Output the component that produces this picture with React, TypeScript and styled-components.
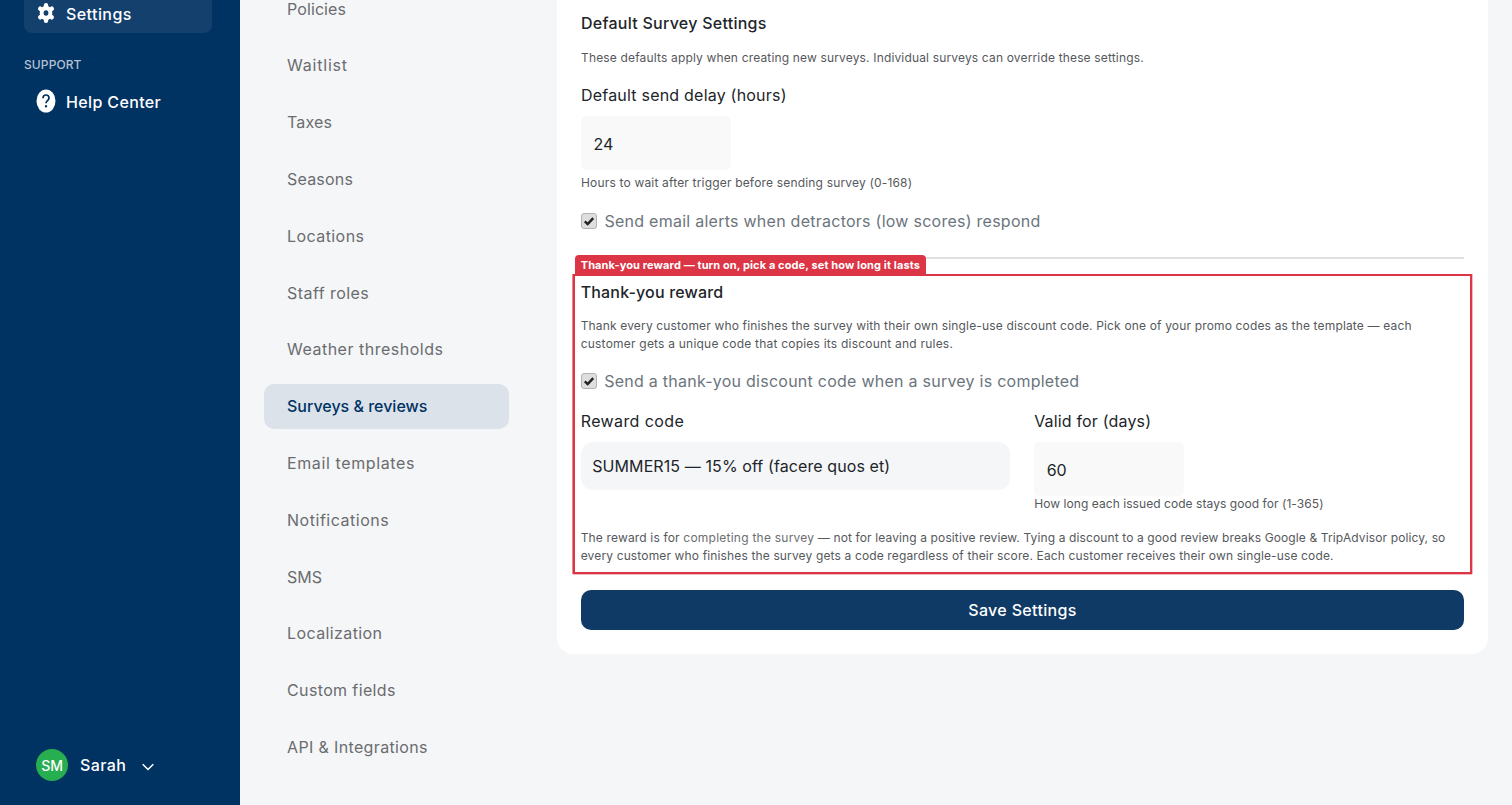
import React from 'react';
import styled, { createGlobalStyle } from 'styled-components';

const GlobalStyle = createGlobalStyle`
  * { box-sizing: border-box; }
  body {
    margin: 0;
    background: #f5f6f8;
    color: #212529;
    font: 400 16px/24px Inter, 'Liberation Sans', sans-serif;
  }
`;

type Tracked = { $track?: number };
const tracking = ({ $track = 0 }: Tracked) => `letter-spacing: ${$track}px;`;

const Shell = styled.div`
  display: flex;
  height: 805px;
  overflow: hidden;
`;

const Sidebar = styled.aside`
  display: flex;
  flex-direction: column;
  flex: none;
  width: 240px;
  padding: 0 28px 24px 24px;
  background: #003262;
  color: #fff;
  font-weight: 500;
`;

const MenuItem = styled.div<{ $active?: boolean }>`
  display: flex;
  align-items: center;
  gap: 10px;
  flex: none;
  height: 38px;
  padding-left: 12px;
  border-radius: 8px;
  background: ${({ $active }) => ($active ? '#14406e' : 'transparent')};
  svg { flex: none; margin-bottom: 2px; }
  &:first-child { margin-top: -5px; }
`;

const MenuText = styled.span<Tracked>`
  ${tracking}
`;

const GroupLabel = styled.div<Tracked>`
  margin: 23px 0 9px;
  color: #b3c2d2;
  font-size: 12px;
  line-height: 18px;
  ${tracking}
`;

const Profile = styled.div`
  display: flex;
  align-items: center;
  margin-top: auto;
  padding-left: 12px;
`;

const Avatar = styled.div<Tracked>`
  width: 32px;
  height: 32px;
  margin-right: 12px;
  padding-top: 1px;
  border-radius: 50%;
  background: #27ae50;
  font-size: 14px;
  line-height: 32px;
  text-align: center;
  ${tracking}
`;

const Chevron = styled.svg`
  margin: 4px 0 0 16px;
`;

const SettingsNav = styled.nav`
  display: flex;
  flex-direction: column;
  flex: none;
  gap: 12px;
  width: 244.5px;
  margin: -13.4px 48.5px 0 24px;
`;

const NavLink = styled.a<Tracked & { $active?: boolean }>`
  flex: none;
  height: 44.8px;
  padding-left: 23px;
  border-radius: 10px;
  line-height: 45px;
  white-space: nowrap;
  color: ${({ $active }) => ($active ? '#003262' : '#6a6c6f')};
  background: ${({ $active }) => ($active ? '#dce2ea' : 'transparent')};
  font-weight: ${({ $active }) => ($active ? 500 : 400)};
  ${tracking}
`;

const Card = styled.main`
  width: 931px;
  height: 654px;
  padding: 11px 24px 24px;
  border-radius: 0 0 16px 16px;
  background: #fff;
  white-space: nowrap;
`;

const Heading = styled.h2<Tracked>`
  margin: 0;
  font-size: 16px;
  line-height: 24px;
  font-weight: 500;
  ${tracking}
`;

const Note = styled.p<{ $top: number }>`
  margin: ${({ $top }) => $top}px 0 0;
  color: #55585c;
  font-size: 12px;
  line-height: 18px;
`;

const Line = styled.span<Tracked>`
  display: block;
  ${tracking}
`;

const Phrase = styled.span<Tracked & { $soft?: boolean }>`
  color: ${({ $soft }) => ($soft ? '#6c6e71' : 'inherit')};
  ${tracking}
`;

const Label = styled.label<Tracked>`
  display: block;
  margin-bottom: 9px;
  ${tracking}
`;

const NumberBox = styled.div`
  display: flex;
  align-items: center;
  width: 150px;
  height: 54px;
  padding: 1px 12.5px 0;
  border-radius: 5px;
  background: #f9f9f9;
`;

const SelectBox = styled.div<Tracked>`
  display: flex;
  align-items: center;
  height: 48px;
  padding: 0 11.5px;
  border-radius: 12px;
  background: #f5f6f8;
  ${tracking}
`;

const Field = styled.div<{ $top?: number }>`
  margin-top: ${({ $top = 0 }) => $top}px;
`;

const CheckRow = styled.div<Tracked & { $top: number }>`
  display: flex;
  align-items: center;
  gap: 7.5px;
  margin-top: ${({ $top }) => $top}px;
  color: #6c757d;
  ${tracking}
`;

const Tick = styled.span`
  display: flex;
  width: 16px;
  height: 16px;
  border: 1px solid #b4b4b4;
  border-radius: 3px;
  background: #dedede;
`;

const Divider = styled.hr`
  height: 1.5px;
  margin: 24px 0 15px;
  border: 0;
  background: #dfe0e2;
`;

const Highlight = styled.section`
  position: relative;
  width: 899px;
  height: 300px;
  margin-left: -8px;
  padding: 4px 6px 4px 5.7px;
  border: 2px solid #dc3545;
  box-shadow: -1px 0 0 rgba(220, 53, 69, 0.6), 1px 0 0 rgba(220, 53, 69, 0.35), 0 1px 0 rgba(220, 53, 69, 0.35);
`;

const HighlightTag = styled.div<Tracked>`
  position: absolute;
  top: -21px;
  left: 0;
  width: 351px;
  height: 20px;
  padding-left: 5.7px;
  border-radius: 4px 4px 0 0;
  background: #dc3545;
  color: #fff;
  font-size: 11px;
  font-weight: 700;
  line-height: 20px;
  ${tracking}
`;

const FieldGrid = styled.div`
  display: grid;
  grid-template-columns: 429px 429px;
  gap: 24.5px;
  margin-top: 16px;
`;

const SaveButton = styled.button<Tracked>`
  display: block;
  width: 100%;
  height: 40px;
  margin-top: 16px;
  padding: 1px 0 0;
  border: 0;
  border-radius: 10px;
  background: #0f3a65;
  color: #fff;
  font: 500 16px/24px Inter, 'Liberation Sans', sans-serif;
  ${tracking}
`;

const GearIcon = () => (
  <svg width="20" height="22" viewBox="0 0 20 22">
    <path
      d="M10 3.2v15.600M4.200 6.700l11.600 8.600M15.800 6.700L4.200 15.300"
      stroke="#fff"
      strokeWidth="4.400"
      strokeLinecap="round"
    />
    <ellipse cx="10" cy="11" rx="6.300" ry="7.300" fill="#fff" />
    <ellipse cx="10" cy="11" rx="2.400" ry="2.700" fill="#14406e" />
  </svg>
);

const HelpIcon = () => (
  <svg width="20" height="24" viewBox="0 0 20 24">
    <ellipse cx="10" cy="12" rx="9.5" ry="11.5" fill="#fff" />
    <path d="M7 9.2C7 7.1 8.2 6 10 6s3 1.200 3 3c0 2.500-3 2.800-3 5.300" fill="none" stroke="#003262" strokeWidth="1.700" />
    <ellipse cx="10" cy="17.300" rx="1.100" ry="1.200" fill="#003262" />
  </svg>
);

const Checkbox = () => (
  <Tick>
    <svg width="14" height="14" viewBox="0 0 14 14">
      <path d="M2.800 7.300l2.900 2.800 5.500-6" fill="none" stroke="#222" strokeWidth="2.400" />
    </svg>
  </Tick>
);

const navItems: { name: string; track: number; active?: boolean }[] = [
  { name: 'Policies', track: 0.1 },
  { name: 'Waitlist', track: 0.8 },
  { name: 'Taxes', track: 0.15 },
  { name: 'Seasons', track: 0.2 },
  { name: 'Locations', track: 0.43 },
  { name: 'Staff roles', track: 0.45 },
  { name: 'Weather thresholds', track: 0.5 },
  { name: 'Surveys & reviews', track: 0, active: true },
  { name: 'Email templates', track: 0.61 },
  { name: 'Notifications', track: 0.53 },
  { name: 'SMS', track: 0 },
  { name: 'Localization', track: 0.4 },
  { name: 'Custom fields', track: 0.37 },
  { name: 'API & Integrations', track: 0.36 },
];

export default function App() {
  return (
    <Shell>
      <GlobalStyle />
      <Sidebar>
        <MenuItem $active>
          <GearIcon />
          <MenuText $track={0.43}>Settings</MenuText>
        </MenuItem>
        <GroupLabel $track={0.1}>SUPPORT</GroupLabel>
        <MenuItem>
          <HelpIcon />
          <MenuText $track={0.36}>Help Center</MenuText>
        </MenuItem>
        <Profile>
          <Avatar $track={-0.2}>SM</Avatar>
          <MenuText $track={0.38}>Sarah</MenuText>
          <Chevron width="12" height="8" viewBox="0 0 12 8" fill="none" stroke="#fff" strokeWidth="1.5">
            <path d="M.7 1.200L6 6.500l5.300-5.300" />
          </Chevron>
        </Profile>
      </Sidebar>

      <SettingsNav>
        {navItems.map((item) => (
          <NavLink key={item.name} $track={item.track} $active={item.active}>
            {item.name}
          </NavLink>
        ))}
      </SettingsNav>

      <Card>
        <Heading $track={0.26}>Default Survey Settings</Heading>
        <Note $top={14}>
          <Line $track={0.161}>
            These defaults apply when creating new surveys. Individual surveys can override these settings.
          </Line>
        </Note>
        <Field $top={16}>
          <Label $track={0.21}>Default send delay (hours)</Label>
          <NumberBox>24</NumberBox>
          <Note $top={4}>
            <Line $track={0.178}>Hours to wait after trigger before sending survey (0-168)</Line>
          </Note>
        </Field>
        <CheckRow $top={17} $track={0.255}>
          <Checkbox />
          Send email alerts when detractors (low scores) respond
        </CheckRow>
        <Divider />

        <Highlight>
          <HighlightTag $track={0.115}>Thank-you reward — turn on, pick a code, set how long it lasts</HighlightTag>
          <Heading $track={0.17}>Thank-you reward</Heading>
          <Note $top={13}>
            <Line $track={0.16}>
              Thank every customer who finishes the survey with their own single-use discount code. Pick one of your
              promo codes as the template — each
            </Line>
            <Line $track={0.215}>customer gets a unique code that copies its discount and rules.</Line>
          </Note>
          <CheckRow $top={16.5} $track={0.25}>
            <Checkbox />
            Send a thank-you discount code when a survey is completed
          </CheckRow>
          <FieldGrid>
            <Field>
              <Label $track={0.4}>Reward code</Label>
              <SelectBox $track={0.095}>SUMMER15 — 15% off (facere quos et)</SelectBox>
            </Field>
            <Field>
              <Label $track={0.17}>Valid for (days)</Label>
              <NumberBox>60</NumberBox>
              <Note $top={-1}>
                <Line $track={0.06}>How long each issued code stays good for (1-365)</Line>
              </Note>
            </Field>
          </FieldGrid>
          <Note $top={16}>
            <Line>
              <Phrase $track={0.16}>The reward is for </Phrase>
              <Phrase $track={0.24} $soft>completing the survey</Phrase>
              <Phrase $track={0.122}>
                {' '}— not for leaving a positive review. Tying a discount to a good review breaks Google &amp;
                TripAdvisor policy, so
              </Phrase>
            </Line>
            <Line $track={0.1425}>
              every customer who finishes the survey gets a code regardless of their score. Each customer receives
              their own single-use code.
            </Line>
          </Note>
        </Highlight>

        <SaveButton $track={0.34}>Save Settings</SaveButton>
      </Card>
    </Shell>
  );
}
